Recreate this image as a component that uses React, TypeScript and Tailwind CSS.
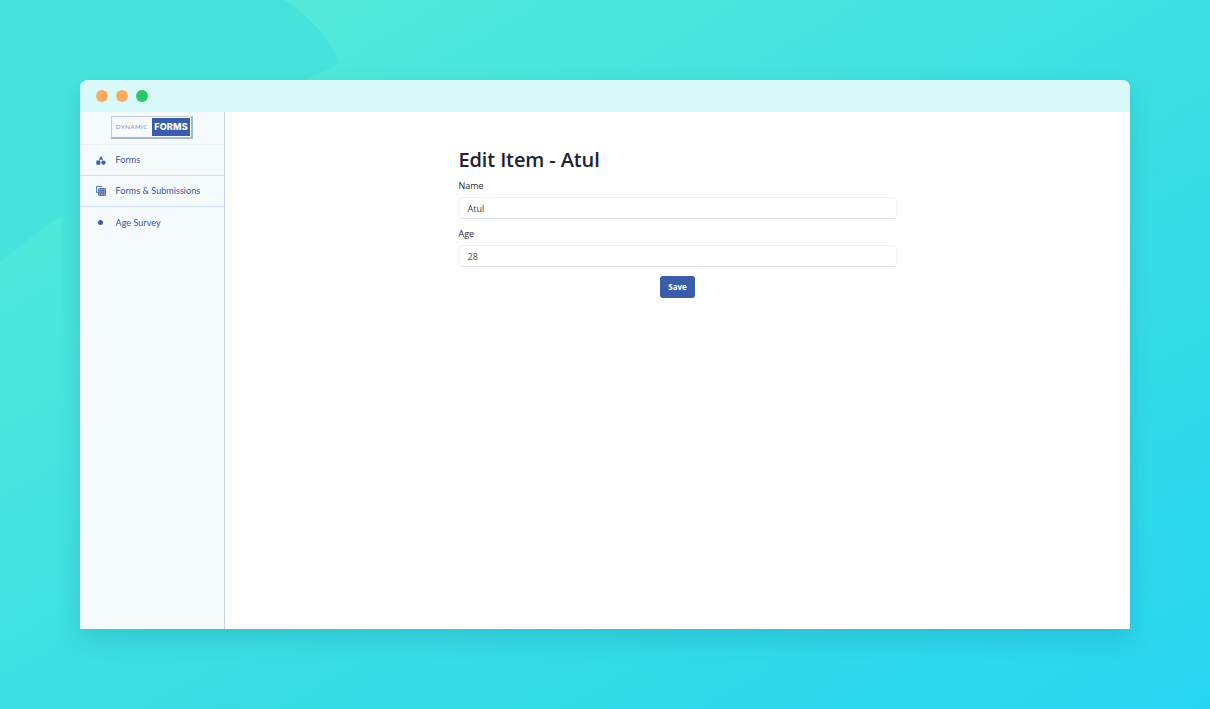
import React from "react";

function FormsIcon() {
  return (
    <svg width="10" height="9" viewBox="0 0 10 9" fill="#3b5ca8">
      <path d="M5 0 L7.2 3.8 H2.8 Z" />
      <rect x="0.4" y="4.6" width="4" height="4.2" rx="0.5" />
      <circle cx="7.5" cy="6.7" r="2.1" />
    </svg>
  );
}

function SubmissionsIcon() {
  return (
    <svg width="10" height="10" viewBox="0 0 10 10" fill="none" stroke="#3b5ca8" strokeWidth="0.8">
      <path d="M6 0.5 H0.5 V6.5 H2" />
      <rect x="2.5" y="2.5" width="7" height="7" rx="0.6" fill="#a9badd" />
      <path d="M2.5 4.8 H9.5 M2.5 7.1 H9.5 M4.8 2.5 V9.5 M7.1 2.5 V9.5" />
    </svg>
  );
}

function Row({ icon, label, line }: { icon: React.ReactNode; label: string; line?: boolean }) {
  return (
    <div className={`flex h-[31px] items-center pl-[15.5px] ${line ? "border-b border-[#d5e0ef]" : ""}`}>
      <span className="flex w-[10px] justify-center">{icon}</span>
      <span className="ml-[10px] text-[9px] tracking-[0.05px] text-[#34549f] font-['Lato',sans-serif]">{label}</span>
    </div>
  );
}

export default function App() {
  return (
    <div className="relative h-[709px] w-[1210px] overflow-hidden bg-[linear-gradient(150deg,#5aedd6_0%,#3de0e2_49%,#28d5ef_100%)] font-['Open_Sans',sans-serif]">
      <svg className="absolute inset-0" width="1210" height="709" viewBox="0 0 1210 709" fill="none">
        <defs>
          <linearGradient id="band" x1="0" y1="216" x2="0" y2="400" gradientUnits="userSpaceOnUse">
            <stop offset="0" stopColor="#46e3dd" />
            <stop offset="1" stopColor="#46e3dd" stopOpacity="0" />
          </linearGradient>
        </defs>
        <path d="M0 0 H284 C308 14 330 40 339 62 C332 70 318 72 305 80 L80 216 L62 216 C40 228 20 248 0 262 Z" fill="#46e3dd" />
        <rect x="62" y="216" width="18" height="184" fill="url(#band)" />
      </svg>
      <div className="relative px-[80px] pt-[80px]">
        <div className="flex h-[549px] w-[1050px] flex-col overflow-hidden rounded-t-[8px] bg-white shadow-[0_10px_24px_rgba(0,70,100,0.16)]">
          <div className="flex h-[32px] shrink-0 items-center gap-[8px] bg-[#d9f9f8] pl-[16px]">
            <span className="h-[12px] w-[12px] rounded-full bg-[#fdab60]" />
            <span className="h-[12px] w-[12px] rounded-full bg-[#fdab60]" />
            <span className="h-[12px] w-[12px] rounded-full bg-[#2cc766]" />
          </div>
          <div className="flex min-h-0 flex-1">
            <aside className="w-[145px] shrink-0 border-r border-[#c5d6ea] bg-[#f5fafd]">
              <div className="flex h-[33px] items-start justify-center border-b border-dotted border-[#dfe7f1] pt-[4px]">
                <div className="flex h-[23px] w-[82px] items-center justify-between border border-[#c3cfe4] border-r-2 border-b-2 border-r-[#a6b8d8] border-b-[#a6b8d8] bg-[#f8fafd] pl-[4px] pr-[1px]">
                  <span className="text-[6px] leading-none tracking-[0.55px] text-[#7d90b6] font-['Lato',sans-serif]">DYNAMIC</span>
                  <span className="flex h-[18px] w-[38px] items-center justify-center bg-[#3b5ca8] text-[9px] font-extrabold tracking-[0.2px] text-white font-['Inter',sans-serif]">FORMS</span>
                </div>
              </div>
              <Row icon={<FormsIcon />} label="Forms" line />
              <Row icon={<SubmissionsIcon />} label="Forms & Submissions" line />
              <Row icon={<span className="block h-[5px] w-[5px] rounded-full bg-[#3b5ca8]" />} label="Age Survey" />
            </aside>
            <main className="flex flex-1 justify-center bg-white">
              <div className="w-[438px] pt-[34px]">
                <h1 className="text-[20px] font-semibold leading-[28px] tracking-[-0.13px] text-[#1f2333]">Edit Item - Atul</h1>
                <label className="mt-[5px] block text-[9px] font-medium leading-[14px] text-[#1f2333]">Name</label>
                <div className="mt-[4px] flex h-[22px] items-center rounded-[4px] border border-[#f2f2f6] border-b-[#e2e3ec] bg-white px-[8px] pt-[1px] text-[9px] text-[#4b3a36]">Atul</div>
                <label className="mt-[8px] block text-[9px] font-medium leading-[14px] text-[#1f2333]">Age</label>
                <div className="mt-[4px] flex h-[22px] items-center rounded-[4px] border border-[#f2f2f6] border-b-[#e2e3ec] bg-white px-[8px] pt-[1px] text-[9px] text-[#4b4b55]">28</div>
                <div className="mt-[9px] flex justify-center">
                  <button className="h-[22px] w-[35px] rounded-[3px] bg-[#3b5ca8] text-[8px] font-bold text-white">Save</button>
                </div>
              </div>
            </main>
          </div>
        </div>
      </div>
    </div>
  );
}
